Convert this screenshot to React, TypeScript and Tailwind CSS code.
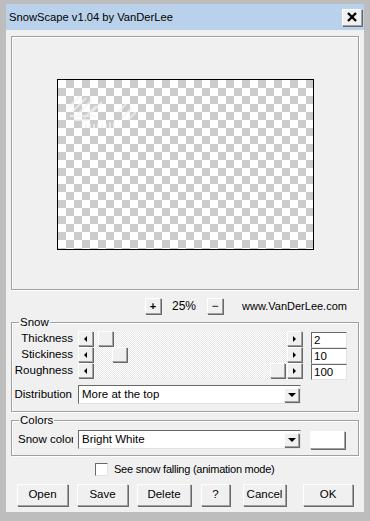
import type { ReactNode } from "react";

const raised =
  "border border-t-white border-l-white border-r-[#a0a0a0] border-b-[#a0a0a0] shadow-[1px_1px_0_#696969]";
const sunken =
  "border border-t-[#696969] border-l-[#696969] border-r-[#e3e3e3] border-b-[#e3e3e3] bg-white";
const etched = "border border-[#a0a0a0] shadow-[inset_1px_1px_0_#fff,1px_1px_0_#fff]";

function Arrow({ dir }: { dir: "left" | "right" | "down" }) {
  if (dir === "left")
    return <span className="h-0 w-0 border-y-[3px] border-r-[3px] border-y-transparent border-r-black" />;
  if (dir === "right")
    return <span className="h-0 w-0 border-y-[3px] border-l-[3px] border-y-transparent border-l-black" />;
  return <span className="h-0 w-0 border-x-[4px] border-t-[4px] border-x-transparent border-t-black" />;
}

function ArrowBtn({ dir }: { dir: "left" | "right" }) {
  return (
    <div className={`flex h-[15px] w-[15px] shrink-0 items-center justify-center bg-[#f0f0f0] ${raised}`}>
      <Arrow dir={dir} />
    </div>
  );
}

function Slider({ value }: { value: number }) {
  return (
    <div className="flex h-[16px] w-[224px] bg-[repeating-conic-gradient(#ffffff_0_25%,#e6e6e6_0_50%)] bg-[length:2px_2px]">
      <ArrowBtn dir="left" />
      <div className="flex flex-1 pl-[1px]">
        <div style={{ width: (value / 100) * 176 }} />
        <div className={`h-[15px] w-[15px] bg-[#f0f0f0] ${raised}`} />
      </div>
      <ArrowBtn dir="right" />
    </div>
  );
}

function Combo({ text }: { text: string }) {
  return (
    <div className={`flex h-[19px] w-[223px] shrink-0 items-center pl-[3px] pr-[1px] ${sunken}`}>
      <span className="flex-1 text-[11.5px] leading-none">{text}</span>
      <div className={`flex h-[14px] w-[15px] items-center justify-center bg-[#f0f0f0] ${raised}`}>
        <Arrow dir="down" />
      </div>
    </div>
  );
}

function Group({ title, children, className }: { title: string; children: ReactNode; className: string }) {
  return (
    <fieldset className={`${etched} ${className}`}>
      <legend className="ml-[7px] px-[1px] text-[11.5px] leading-[13px]">{title}</legend>
      {children}
    </fieldset>
  );
}

function Btn({ label, className }: { label: string; className: string }) {
  return (
    <button className={`flex h-[22px] items-center justify-center bg-[#f0f0f0] text-[11.5px] ${raised} ${className}`}>
      {label}
    </button>
  );
}

const sliders = [
  { label: "Thickness", value: 2 },
  { label: "Stickiness", value: 10 },
  { label: "Roughness", value: 100 },
];

export default function App() {
  return (
    <div className="flex h-[521px] w-[370px] flex-col bg-[#bdbdbd] px-[6px] pb-[9px] pt-[4px] font-['Liberation_Sans',Arial,sans-serif] text-black">
      <div className="flex h-[26px] shrink-0 items-center justify-between bg-[#b9d1ea] pl-[3px] pr-[2px]">
        <span className="text-[11.2px]">SnowScape v1.04 by VanDerLee</span>
        <div className={`flex h-[17px] w-[20px] items-center justify-center bg-[#f0f0f0] ${raised}`}>
          <svg width="10" height="10" viewBox="0 0 10 10">
            <path d="M1 1L9 9M9 1L1 9" stroke="#000" strokeWidth="2.4" />
          </svg>
        </div>
      </div>

      <div className="flex flex-1 flex-col bg-[#f0f0f0] px-[5px]">
        <div className={`mt-[6px] flex h-[254px] shrink-0 items-center justify-center ${etched}`}>
          <div className="mt-[3px] h-[171px] w-[257px] border border-black bg-[repeating-conic-gradient(#cccccc_0_25%,#ffffff_0_50%)] bg-[length:16px_16px] pl-[8px] pt-[8px]">
            <svg width="76" height="42" viewBox="0 0 76 42" className="opacity-70">
              <g stroke="#f4f4f4" strokeWidth="2" fill="none">
                <path d="M2 20L14 8M6 24L20 10M12 26L26 12M18 30L30 18M26 24L36 14" />
                <path d="M52 24L60 16M56 30L66 20M62 32L70 24" />
                <path d="M4 28L30 28M8 32L24 32" />
                <path d="M20 36V40M24 36V40M28 36V40M32 36V40M36 36V40M40 36V40M44 34V40M48 34V40" />
              </g>
            </svg>
          </div>
        </div>

        <div className="mt-[8px] flex h-[16px] shrink-0 items-center">
          <div className={`ml-[134px] flex h-[16px] w-[16px] items-center justify-center bg-[#f0f0f0] text-[11px] font-bold leading-none ${raised}`}>+</div>
          <span className="w-[46px] text-center text-[12px] leading-none">25%</span>
          <div className={`flex h-[16px] w-[16px] items-center justify-center bg-[#f0f0f0] text-[12px] leading-none ${raised}`}>−</div>
          <span className="ml-[19px] text-[11px] leading-none">www.VanDerLee.com</span>
        </div>

        <Group title="Snow" className="mt-[2px] pb-[7px]">
          <div className="mt-[2px] flex">
            <div className="flex flex-col">
              {sliders.map((s) => (
                <div key={s.label} className="flex h-[16px] items-center">
                  <span className="w-[66px] pr-[5px] text-right text-[11.5px] leading-none">{s.label}</span>
                  <Slider value={s.value} />
                </div>
              ))}
            </div>
            <div className="ml-[9px] mt-[1px] flex flex-col">
              {sliders.map((s) => (
                <div key={s.label} className={`h-[16px] w-[36px] pl-[2px] text-[11.5px] leading-[14px] ${sunken}`}>
                  {s.value}
                </div>
              ))}
            </div>
          </div>
          <div className="mt-[5px] flex items-center">
            <span className="w-[66px] pr-[6px] text-right text-[11.5px]">Distribution</span>
            <Combo text="More at the top" />
          </div>
        </Group>

        <Group title="Colors" className="mt-[2px] pb-[6px]">
          <div className="mt-[3px] flex items-center">
            <span className="mr-[5px] w-[61px] overflow-hidden whitespace-nowrap pl-[6px] text-[11.5px]">Snow color</span>
            <Combo text="Bright White" />
            <div className={`ml-[9px] h-[18px] w-[35px] bg-white ${raised}`} />
          </div>
        </Group>

        <div className="mt-[7px] flex h-[13px] shrink-0 items-center">
          <div className={`ml-[84px] h-[13px] w-[13px] ${sunken}`} />
          <span className="ml-[6px] text-[11px] leading-none tracking-[-0.25px]">See snow falling (animation mode)</span>
        </div>

        <div className="mt-[8px] flex">
          <Btn label="Open" className="ml-[6px] w-[51px]" />
          <Btn label="Save" className="ml-[9px] w-[51px]" />
          <Btn label="Delete" className="ml-[9px] w-[54px]" />
          <Btn label="?" className="ml-[10px] w-[29px]" />
          <Btn label="Cancel" className="ml-[13px] w-[43px]" />
          <Btn label="OK" className="ml-[17px] w-[50px]" />
        </div>
      </div>
    </div>
  );
}
